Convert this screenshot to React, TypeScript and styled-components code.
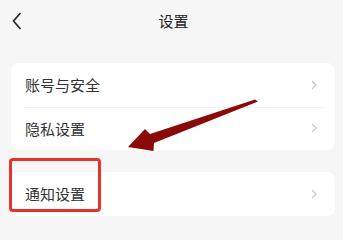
import styled, { createGlobalStyle } from 'styled-components';

const GlobalStyle = createGlobalStyle`
  html, body {
    margin: 0;
    padding: 0;
    background: #f6f6f6;
  }
  body {
    font-family: "Noto Sans CJK SC", "Noto Sans", sans-serif;
    color: #333;
  }
`;

const GROUPS = [['账号与安全', '隐私设置'], ['通知设置']];

function Chevron() {
  return (
    <svg width="6" height="10" viewBox="0 0 6 10">
      <path d="M1 1 L5 5 L1 9" fill="none" stroke="#c8c8c8" strokeWidth="1.2" />
    </svg>
  );
}

function App() {
  return (
    <StyledPage>
      <GlobalStyle />
      <StyledHeader>
        <StyledBack>
          <svg width="10" height="18" viewBox="0 0 10 18">
            <path d="M8.5 1 L1.5 9 L8.5 17" fill="none" stroke="#222" strokeWidth="1.6" />
          </svg>
        </StyledBack>
        <StyledTitle>设置</StyledTitle>
      </StyledHeader>

      <StyledList>
        {GROUPS.map((group, gi) => (
          <StyledCard key={gi}>
            {group.map((label, i) => (
              <StyledRow key={label} divided={i > 0}>
                <span>{label}</span>
                <Chevron />
              </StyledRow>
            ))}
          </StyledCard>
        ))}
      </StyledList>

      <StyledHighlight />
      <StyledArrow width="343" height="220" viewBox="0 0 343 220">
        <polygon
          points="255,99.5 258,101.5 154,143 153.5,151 128,147 145,129 150,134"
          fill="#8a0a0a"
        />
      </StyledArrow>
    </StyledPage>
  );
}

export default App;

const StyledPage = styled('div')({
  position: 'relative',
  width: '343px',
  height: '220px',
  overflow: 'hidden',
});

const StyledHeader = styled('div')({
  position: 'relative',
  height: '40px',
  display: 'flex',
  alignItems: 'center',
  justifyContent: 'center',
});

const StyledBack = styled('div')({
  position: 'absolute',
  left: '12px',
  top: '12px',
  display: 'flex',
});

const StyledTitle = styled('div')({
  fontSize: '15px',
  color: '#222',
  marginLeft: '4px',
});

const StyledList = styled('div')({
  display: 'flex',
  flexDirection: 'column',
  gap: '22px',
  padding: '23px 8px 0 11px',
});

const StyledCard = styled('div')({
  background: '#fff',
  borderRadius: '8px',
  padding: '0 18px 0 14px',
});

const StyledRow = styled('div')<{ divided?: boolean }>(({ divided }) => ({
  position: 'relative',
  height: '43.5px',
  display: 'flex',
  alignItems: 'center',
  justifyContent: 'space-between',
  fontSize: '15px',
  color: '#333',

  '&::before': {
    content: '""',
    display: divided ? 'block' : 'none',
    position: 'absolute',
    top: 0,
    left: 0,
    right: '-8px',
    borderTop: '1px solid #efefef',
  },
}));

const StyledHighlight = styled('div')({
  position: 'absolute',
  left: '9px',
  top: '158px',
  width: '92px',
  height: '54px',
  boxSizing: 'border-box',
  border: '3px solid #e8322e',
  borderRadius: '4px',
});

const StyledArrow = styled('svg')({
  position: 'absolute',
  left: 0,
  top: 0,
  pointerEvents: 'none',
});
